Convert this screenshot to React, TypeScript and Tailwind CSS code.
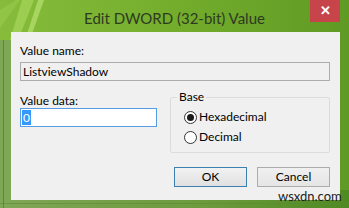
import React from 'react';

const font = { fontFamily: 'Lato, "Open Sans", sans-serif' };

const Radio = ({ checked, label }: { checked?: boolean; label: string }) => (
  <div className="flex items-center h-[20px]">
    <span className="w-[13px] h-[13px] rounded-full border border-[#333] bg-white flex items-center justify-center">
      {checked && <span className="w-[7px] h-[7px] rounded-full bg-[#1a1a1a]" />}
    </span>
    <span className="ml-[2px] text-[12px] text-black">{label}</span>
  </div>
);

const App = () => {
  return (
    <div
      className="relative w-[349px] h-[208px] overflow-hidden bg-gradient-to-r from-[#86bc3a] via-[#74ad2c] to-[#5f9a24]"
      style={font}
    >
      {/* frame decoration */}
      <svg className="absolute inset-0" width="349" height="208">
        <defs>
          <linearGradient id="bottom" x1="0" x2="1" y1="0" y2="0">
            <stop offset="0" stopColor="#7fa656" />
            <stop offset="0.6" stopColor="#6b9a3c" />
            <stop offset="1" stopColor="#4f8a22" />
          </linearGradient>
        </defs>
        <path d="M22 0 L34 0 L10 60 L4 60 Z" fill="#b6e06a" opacity="0.5" />
        <path d="M38 0 L44 0 L12 90 L9 90 Z" fill="#c6ec82" opacity="0.55" />
        <path d="M0 10 L16 0 L20 0 L0 28 Z" fill="#a8d858" opacity="0.35" />
        <rect x="0" y="190" width="349" height="18" fill="url(#bottom)" />
        <rect x="0" y="40" width="11" height="168" fill="#7fa856" />
        <rect x="3" y="40" width="1" height="168" fill="#5c8a34" />
        <rect x="0" y="203" width="349" height="1" fill="#5c8a34" opacity="0.6" />
      </svg>

      {/* title bar */}
      <div className="relative h-[32px] flex items-start">
        <div className="flex-1 text-center pt-[7px] text-[15px] text-[#2e3a22]">
          Edit DWORD (32-bit) Value
        </div>
        <div className="absolute right-[9px] top-0 w-[30px] h-[22px] bg-[#c7444a] flex items-center justify-center text-white text-[13px] font-bold">
          ✕
        </div>
      </div>

      {/* client area */}
      <div className="relative ml-[11px] w-[329px] h-[168px] bg-[#f0f0f0] pl-[9px] pr-[10px] pt-[10px] text-[12px] text-black">
        <div className="h-[18px] leading-[18px]">Value name:</div>
        <div className="mt-[2px] h-[19px] border border-[#adadad] bg-[#f0f0f0] px-[2px] leading-[17px]">
          ListviewShadow
        </div>
        <div className="flex mt-[12px]">
          <div className="w-[137px]">
            <div className="h-[18px] leading-[18px] -mt-[1px]">Value data:</div>
            <div className="mt-[-2px] h-[19px] w-[137px] border border-[#569de5] bg-white px-[1px] flex items-center">
              <span className="bg-[#3399ff] text-white px-[1px] leading-[15px]">0</span>
            </div>
          </div>
          <div className="ml-[13px] relative mt-[4px] w-[160px] h-[56px] border border-[#dcdcdc] rounded-[2px] pl-[13px] pt-[9px]">
            <span className="absolute -top-[9px] left-[6px] bg-[#f0f0f0] px-[2px] leading-[16px]">Base</span>
            <Radio checked label="Hexadecimal" />
            <Radio label="Decimal" />
          </div>
        </div>
        <div className="flex justify-end gap-[10px] mt-[14px]">
          <button className="w-[73px] h-[20px] border border-[#3c7fb1] bg-gradient-to-b from-[#f2f2f2] to-[#e0e0e0] text-[12px] leading-[18px]">
            OK
          </button>
          <button className="w-[73px] h-[20px] border border-[#acacac] bg-gradient-to-b from-[#f0f0f0] to-[#e5e5e5] text-[12px] leading-[18px]">
            Cancel
          </button>
        </div>
      </div>

      <div className="absolute left-[278px] top-[189px] text-[13px] text-[#222] leading-[14px]">
        wsxdn.com
      </div>
    </div>
  );
};

export default App;
